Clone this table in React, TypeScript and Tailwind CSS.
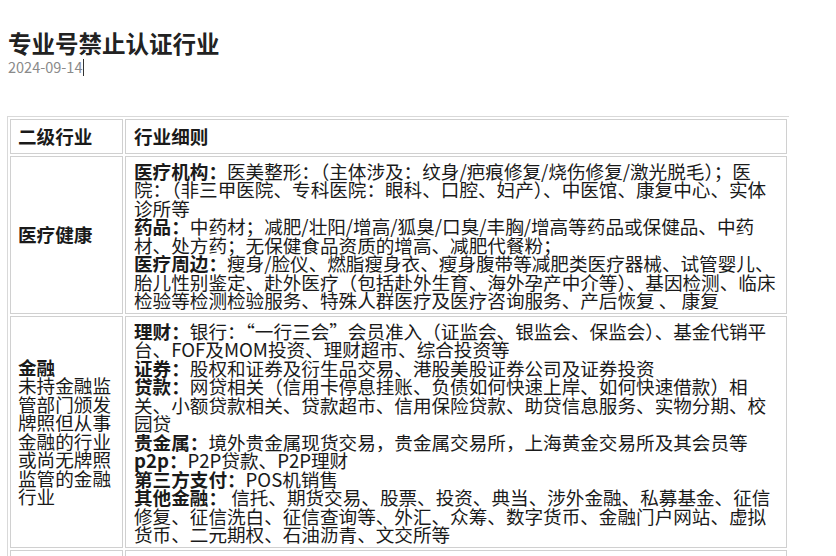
const rows = [
  {
    head: <b className="font-bold">医疗健康</b>,
    body: (
      <>
        <b className="font-bold">医疗机构：</b>医美整形：（主体涉及：纹身/疤痕修复/烧伤修复/激光脱毛）；医院：（非三甲医院、专科医院：眼科、口腔、妇产）、中医馆、康复中心、实体诊所等
        <br />
        <b className="font-bold">药品：</b>中药材；减肥/壮阳/增高/狐臭/口臭/丰胸/增高等药品或保健品、中药材、处方药；无保健食品资质的增高、减肥代餐粉；
        <br />
        <b className="font-bold">医疗周边：</b>瘦身/脸仪、燃脂瘦身衣、瘦身腹带等减肥类医疗器械、试管婴儿、胎儿性别鉴定、赴外医疗（包括赴外生育、海外孕产中介等）、基因检测、临床检验等检测检验服务、特殊人群医疗及医疗咨询服务、产后恢复 、 康复
      </>
    ),
  },
  {
    head: (
      <>
        <b className="font-bold">金融</b>
        <br />
        未持金融监管部门颁发牌照但从事金融的行业或尚无牌照监管的金融行业
      </>
    ),
    body: (
      <>
        <b className="font-bold">理财：</b>银行：“一行三会”会员准入（证监会、银监会、保监会）、基金代销平台、FOF及MOM投资、理财超市、综合投资等
        <br />
        <b className="font-bold">证券：</b>股权和证券及衍生品交易、港股美股证券公司及证券投资
        <br />
        <b className="font-bold">贷款：</b>网贷相关（信用卡停息挂账、负债如何快速上岸、如何快速借款）相关、小额贷款相关、贷款超市、信用保险贷款、助贷信息服务、实物分期、校园贷
        <br />
        <b className="font-bold">贵金属：</b>境外贵金属现货交易，贵金属交易所，上海黄金交易所及其会员等
        <br />
        <b className="font-bold">p2p：</b>P2P贷款、P2P理财
        <br />
        <b className="font-bold">第三方支付：</b>POS机销售
        <br />
        <b className="font-bold">其他金融：</b> 信托、期货交易、股票、投资、典当、涉外金融、私募基金、征信修复、征信洗白、征信查询等、外汇、众筹、数字货币、金融门户网站、虚拟货币、二元期权、石油沥青、文交所等
      </>
    ),
  },
];

export default function App() {
  return (
    <div className="min-h-screen bg-white pl-[7px] pt-[30px] font-['Noto_Sans_CJK_SC','Noto_Sans',sans-serif] text-[#1a1a1a]">
      <h1 className="ml-px text-[23.5px] font-bold leading-[26px] text-[#222]">专业号禁止认证行业</h1>
      <div className="ml-px mt-px flex items-center text-[14.5px] leading-[20px] text-[#8a8a8a]">
        2024-09-14
        <span className="ml-[1px] inline-block h-[17px] border-l border-[#333]"></span>
      </div>

      <table className="mt-[39px] w-[782px] border-separate border-spacing-[2px] border-t border-l border-[#d9d9d9] text-[18.6px] leading-[18.5px]">
        <thead>
          <tr>
            <th className="w-[113px] border border-[#d0d0d0] px-[7px] py-[7px] text-left font-bold">二级行业</th>
            <th className="border border-[#d0d0d0] px-[8px] py-[7px] text-left font-bold">行业细则</th>
          </tr>
        </thead>
        <tbody>
          {rows.map((row, i) => (
            <tr key={i}>
              <td className="w-[113px] border border-[#d0d0d0] px-[7px] py-1 align-middle">{row.head}</td>
              <td className="border border-[#d0d0d0] px-[8px] pt-[5px] pb-[3px] align-middle">{row.body}</td>
            </tr>
          ))}
          <tr>
            <td className="h-[40px] border border-[#d0d0d0]"></td>
            <td className="h-[40px] border border-[#d0d0d0]"></td>
          </tr>
        </tbody>
      </table>
    </div>
  );
}
